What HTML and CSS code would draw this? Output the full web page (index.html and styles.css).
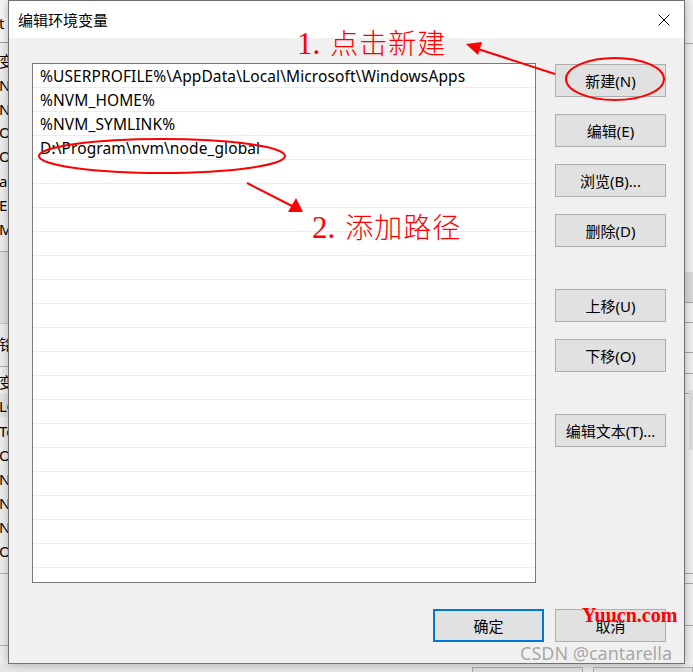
FILE: index.html
```html
<!DOCTYPE html>
<html lang="zh-CN">
<head>
<meta charset="utf-8">
<title>编辑环境变量</title>
<link rel="stylesheet" href="styles.css">
</head>
<body>
<div class="desk">
  <div class="bg-left">
    <div class="bl-top"><span class="frag" style="top:13px">t</span></div>
    <span class="frag" style="top:51px">变</span>
    <span class="frag" style="top:75px">N</span>
    <span class="frag" style="top:99px">N</span>
    <span class="frag" style="top:122px">Or</span>
    <span class="frag" style="top:146px">Or</span>
    <span class="frag" style="top:171px">a</span>
    <span class="frag" style="top:195px">E</span>
    <span class="frag" style="top:219px">M</span>
    <div class="bl-band"></div>
    <span class="frag" style="top:334px">铭</span>
    <div class="bl-line" style="top:366px"></div>
    <span class="frag" style="top:372px">变</span>
    <div class="bl-sel"></div>
    <span class="frag" style="top:396px">LO</span>
    <span class="frag" style="top:421px">To</span>
    <span class="frag" style="top:445px">Or</span>
    <span class="frag" style="top:469px">NU</span>
    <span class="frag" style="top:493px">NV</span>
    <span class="frag" style="top:517px">NV</span>
    <span class="frag" style="top:541px">OS</span>
    <div class="bl-line" style="top:573px"></div>
    <div class="bl-line" style="top:645px"></div>
  </div>

  <div class="bg-right">
    <div class="br-line" style="top:43px"></div>
    <div class="br-block" style="top:272px;height:30px"></div>
    <div class="br-line" style="top:302px"></div>
    <div class="br-line" style="top:322px"></div>
    <div class="br-line" style="top:352px"></div>
    <div class="br-line" style="top:373px"></div>
    <div class="br-line" style="top:393px"></div>
    <div class="br-scroll"></div>
    <div class="br-line" style="top:573px"></div>
    <div class="br-line" style="top:583px"></div>
    <div class="br-line" style="top:625px"></div>
  </div>

  <div class="bg-bottom">
    <div class="bb-btn" style="left:472px;width:111px"></div>
    <div class="bb-btn" style="left:593px;width:100px"></div>
  </div>

  <div class="dialog">
    <div class="titlebar">
      <span class="title">编辑环境变量</span>
      <svg class="close" width="12" height="12" viewBox="0 0 12 12"><path d="M0.5 0.5 L11.5 11.5 M11.5 0.5 L0.5 11.5" stroke="#000" stroke-width="1" fill="none"/></svg>
    </div>
    <div class="body">
      <div class="main">
        <div class="list">
          <div class="row">%USERPROFILE%\AppData\Local\Microsoft\WindowsApps</div>
          <div class="row">%NVM_HOME%</div>
          <div class="row">%NVM_SYMLINK%</div>
          <div class="row">D:\Program\nvm\node_global</div>
          <div class="row"></div><div class="row"></div><div class="row"></div><div class="row"></div>
          <div class="row"></div><div class="row"></div><div class="row"></div><div class="row"></div>
          <div class="row"></div><div class="row"></div><div class="row"></div><div class="row"></div>
          <div class="row"></div><div class="row"></div><div class="row"></div><div class="row"></div>
          <div class="row"></div><div class="row"></div>
        </div>
        <div class="btns">
          <div class="btn">新建(N)</div>
          <div class="btn">编辑(E)</div>
          <div class="btn">浏览(B)...</div>
          <div class="btn">删除(D)</div>
          <div class="btn sep">上移(U)</div>
          <div class="btn">下移(O)</div>
          <div class="btn sep">编辑文本(T)...</div>
        </div>
      </div>
      <div class="footer">
        <div class="btn default">确定</div>
        <div class="btn">取消</div>
      </div>
    </div>
  </div>

  <svg class="annot" width="693" height="672" viewBox="0 0 693 672">
    <ellipse cx="615" cy="79" rx="49" ry="21" fill="none" stroke="#f00" stroke-width="2"/>
    <ellipse cx="162" cy="156" rx="123" ry="17" fill="none" stroke="#f00" stroke-width="2"/>
    <line x1="555" y1="74" x2="478" y2="49" stroke="#f00" stroke-width="2"/>
    <polygon points="466,44 478,55 482,42" fill="#f00"/>
    <line x1="247" y1="183" x2="292" y2="206" stroke="#f00" stroke-width="2"/>
    <polygon points="303,212 296,198 288,212" fill="#f00"/>
  </svg>

  <div class="note n1"><span class="num">1.</span><span class="cjk">点击新建</span></div>
  <div class="note n2"><span class="num">2.</span><span class="cjk">添加路径</span></div>

  <div class="wm1">Yuucn.com</div>
  <div class="wm2">CSDN @cantarella</div>
</div>
</body>
</html>
```

FILE: styles.css
```css
html, body {
  margin: 0;
  padding: 0;
}
body {
  width: 693px;
  height: 672px;
  overflow: hidden;
  font-family: "Noto Sans", "Noto Sans CJK SC", sans-serif;
  font-size: 15px;
  color: #000;
}
.desk {
  position: relative;
  width: 693px;
  height: 672px;
  background: #f0f0f0;
  overflow: hidden;
}

/* background window fragments */
.bg-left {
  position: absolute;
  left: 0;
  top: 0;
  width: 9px;
  height: 672px;
  background: #f0f0f0;
  overflow: hidden;
}
.bl-top {
  position: absolute;
  left: 0; top: 0;
  width: 9px; height: 42px;
  background: #f7f7f7;
  border-bottom: 1px solid #a0a0a0;
}
.frag {
  position: absolute;
  left: -1px;
  line-height: 20px;
  font-size: 15px;
  white-space: nowrap;
}
.bl-band {
  position: absolute;
  left: 0; top: 251px;
  width: 9px; height: 71px;
  background: #e3e3e3;
  border-top: 1px solid #a8a8a8;
  border-bottom: 1px solid #c8c8c8;
}
.bl-line {
  position: absolute;
  left: 0;
  width: 9px;
  height: 1px;
  background: #b0b0b0;
}
.bl-sel {
  position: absolute;
  left: 0; top: 394px;
  width: 9px; height: 23px;
  background: #e5e5e5;
}
.bg-right {
  position: absolute;
  right: 0;
  top: 0;
  width: 8px;
  height: 672px;
  background: #f0f0f0;
}
.br-line {
  position: absolute;
  left: 0;
  width: 8px;
  height: 1px;
  background: #a8a8a8;
}
.br-block {
  position: absolute;
  left: 0;
  width: 8px;
  background: #dadada;
}
.br-scroll {
  position: absolute;
  left: 4px;
  top: 390px;
  width: 4px;
  height: 60px;
  background: #dcdcdc;
}
.bg-bottom {
  position: absolute;
  left: 0;
  top: 664px;
  width: 693px;
  height: 8px;
  background: #e8e8e8;
}
.bb-btn {
  position: absolute;
  top: 3px;
  height: 10px;
  background: #e1e1e1;
  border: 1px solid #adadad;
  box-sizing: border-box;
}

/* dialog window */
.dialog {
  position: absolute;
  left: 8px;
  top: 0;
  width: 677px;
  height: 664px;
  box-sizing: border-box;
  border: 1px solid #707070;
  background: #f0f0f0;
  box-shadow: 0 0 10px rgba(0, 0, 0, 0.28);
  display: flex;
  flex-direction: column;
  font-family: "Noto Sans", "Noto Sans CJK SC", sans-serif;
}
.titlebar {
  height: 37px;
  flex: none;
  background: #fff;
  display: flex;
  align-items: center;
  justify-content: space-between;
  padding: 0 14px 0 9px;
}
.title {
  font-family: "Noto Sans CJK SC", sans-serif;
  font-size: 15px;
  line-height: 20px;
}
.close {
  display: block;
}
.body {
  flex: 1;
  display: flex;
  flex-direction: column;
  padding: 25px 18px 21px 23px;
}
.main {
  display: flex;
  gap: 19px;
}
.list {
  width: 504px;
  height: 520px;
  box-sizing: border-box;
  border: 1px solid #7a7a7a;
  background: #fff;
  overflow: hidden;
}
.row {
  height: 24px;
  box-sizing: border-box;
  border-bottom: 1px solid #ececec;
  padding: 2px 0 0 7px;
  line-height: 21px;
  font-size: 15.5px;
  letter-spacing: 0.1px;
  white-space: nowrap;
}
.btns {
  display: flex;
  flex-direction: column;
  gap: 17px;
  margin-top: 1px;
}
.btn {
  width: 111px;
  height: 33px;
  box-sizing: border-box;
  border: 1px solid #adadad;
  background: #e1e1e1;
  display: flex;
  align-items: center;
  justify-content: center;
  font-family: "Noto Sans", "Noto Sans CJK SC", sans-serif;
  font-size: 15px;
  white-space: nowrap;
}
.btn.sep {
  margin-top: 25px;
}
.btn.default {
  border: 2px solid #0078d7;
}
.footer {
  margin-top: auto;
  display: flex;
  justify-content: flex-end;
  gap: 11px;
}

/* annotations */
.annot {
  position: absolute;
  left: 0;
  top: 0;
  pointer-events: none;
}
.note {
  position: absolute;
  color: #f00;
  font-size: 28px;
  line-height: 32px;
  white-space: nowrap;
}
.note .num {
  font-family: "Liberation Serif", serif;
  font-size: 31px;
  margin-right: 10px;
}
.note .cjk {
  font-family: "Noto Sans CJK SC", sans-serif;
  font-weight: 300;
  letter-spacing: 1px;
}
.n1 {
  left: 297px;
  top: 26px;
}
.n2 {
  left: 312px;
  top: 210px;
}
.wm1 {
  position: absolute;
  left: 582px;
  top: 602px;
  font-family: "Liberation Serif", serif;
  font-size: 20px;
  font-weight: bold;
  color: #f00;
  line-height: 26px;
}
.wm2 {
  position: absolute;
  left: 520px;
  top: 641px;
  font-family: "Noto Sans", sans-serif;
  font-size: 18px;
  color: #a6a6a6;
  line-height: 24px;
  text-shadow: 0 0 1px #fff;
}
```
